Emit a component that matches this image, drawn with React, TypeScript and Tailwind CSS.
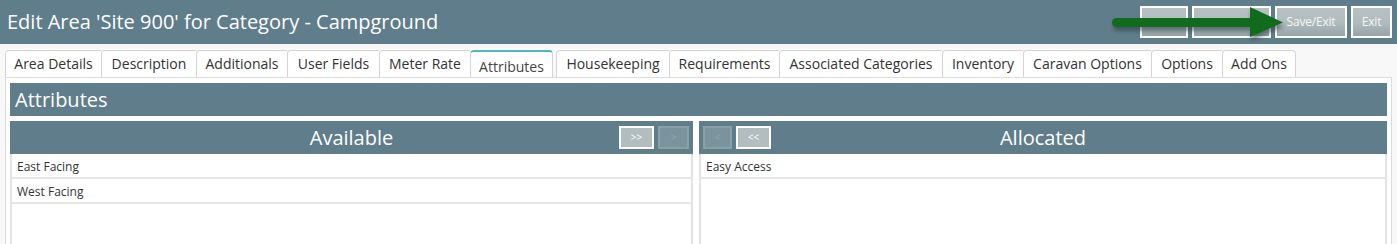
import React from 'react';

const tabs = [
  { label: 'Area Details', w: 96 },
  { label: 'Description', w: 95 },
  { label: 'Additionals', w: 91 },
  { label: 'User Fields', w: 92 },
  { label: 'Meter Rate', w: 91 },
  { label: 'Attributes', w: 83, active: true },
  { label: 'Housekeeping', w: 113 },
  { label: 'Requirements', w: 110 },
  { label: 'Associated Categories', w: 163 },
  { label: 'Inventory', w: 81 },
  { label: 'Caravan Options', w: 128 },
  { label: 'Options', w: 71 },
  { label: 'Add Ons', w: 74, last: true },
];

const font = { fontFamily: '"Open Sans", "Noto Sans", sans-serif' };

function HeadButton({ label, w }: { label?: string; w: string }) {
  return (
    <div
      className={`${w} h-[32px] border-2 border-white bg-gradient-to-b from-[#b6c1c3] via-[#b1bcbe] to-[#97a4a8] flex items-center justify-center text-[12px] tracking-[-0.2px] text-[#f4f6f6]`}
    >
      {label}
    </div>
  );
}

function MoveButton({ label, disabled, w }: { label: string; disabled?: boolean; w: string }) {
  return (
    <div
      className={
        disabled
          ? `${w} h-[23px] border-2 border-[#8aa0a9] bg-[#7a939d] flex items-center justify-center text-[10px] text-[#93a8b0]`
          : `${w} h-[23px] border-2 border-white bg-[#b2bdbf] flex items-center justify-center text-[10px] text-white`
      }
    >
      {label}
    </div>
  );
}

function Panel({
  title,
  items,
  left,
  right,
  w,
}: {
  title: string;
  items: string[];
  left?: React.ReactNode;
  right?: React.ReactNode;
  w: string;
}) {
  return (
    <div className={w}>
      <div className="h-[33px] bg-[#607d8b] grid grid-cols-[1fr_auto_1fr] items-center px-[4px]">
        <div className="flex gap-[4px]">{left}</div>
        <div className="text-[20px] text-white leading-none">{title}</div>
        <div className="flex gap-[4px] justify-end">{right}</div>
      </div>
      <div className="border-x-2 border-[#e3e3e3] h-[140px]">
        {items.map((it) => (
          <div
            key={it}
            className="h-[25px] border-b-2 border-[#e6e6e6] flex items-center pt-[3px] px-[5px] text-[12px] text-[#333]"
          >
            {it}
          </div>
        ))}
      </div>
    </div>
  );
}

export default function App() {
  return (
    <div className="w-[1397px] h-[244px] overflow-hidden bg-[#f8f8f8] relative" style={font}>
      {/* Header */}
      <div className="h-[44px] bg-[#607d8b] flex items-center justify-between pl-[7px] pr-[5px]">
        <h1 className="text-[20px] text-white">Edit Area 'Site 900' for Category - Campground</h1>
        <div className="flex items-center gap-[4px] -mt-[1px]">
          <HeadButton w="w-[48px]" />
          <HeadButton w="w-[79px]" />
          <HeadButton w="w-[72px]" label="Save/Exit" />
          <HeadButton w="w-[41px]" label="Exit" />
        </div>
      </div>

      {/* Green arrow */}
      <svg className="absolute left-[1105px] top-[2px]" width="190" height="42" viewBox="0 0 190 42">
        <defs>
          <filter id="sh" x="-10%" y="-30%" width="120%" height="160%">
            <feGaussianBlur stdDeviation="2" />
          </filter>
        </defs>
        <g fill="#2b3a40" opacity="0.55" filter="url(#sh)" transform="translate(1 4)">
          <rect x="7" y="16" width="140" height="9" rx="4.5" />
          <polygon points="145,5 178,20.5 145,35" />
        </g>
        <rect x="7" y="16" width="142" height="9" rx="4.5" fill="#116b1c" />
        <polygon points="145,5 178,20.5 145,35" fill="#116b1c" />
      </svg>

      {/* Tabs */}
      <div className="flex pl-[5px] mt-[6px] h-[27px]">
        {tabs.map((t) => (
          <div
            key={t.label}
            style={{ width: t.w }}
            className={
              t.active
                ? 'h-[27px] shrink-0 bg-white border border-b-0 border-[#d4d4d4] border-t-2 border-t-[#4bb8c2] rounded-t-[4px] flex items-center justify-center pt-[3px] mr-[3px] text-[14px] text-[#444]'
                : t.last
                ? 'h-[27px] shrink-0 bg-white border border-b-0 border-[#d4d4d4] rounded-t-[4px] flex items-center justify-center pb-[1px] text-[14px] text-[#333]'
                : 'h-[27px] shrink-0 bg-white border-l border-t border-[#d4d4d4] rounded-tl-[4px] flex items-center justify-center pb-[1px] text-[14px] text-[#333]'
            }
          >
            {t.label}
          </div>
        ))}
      </div>

      {/* Content */}
      <div className="mx-[5px] border border-[#dcdcdc] bg-white px-[4px] pt-[5px] h-[220px]">
        <div className="h-[33px] bg-[#607d8b] flex items-center px-[5px] text-[20px] text-white">
          Attributes
        </div>
        <div className="flex gap-[6px] mt-[5px]">
          <Panel
            w="w-[683px]"
            title="Available"
            items={['East Facing', 'West Facing']}
            right={
              <>
                <MoveButton w="w-[35px]" label=">>" />
                <MoveButton w="w-[31px]" label=">" disabled />
              </>
            }
          />
          <Panel
            w="flex-1"
            title="Allocated"
            items={['Easy Access']}
            left={
              <>
                <MoveButton w="w-[29px]" label="<" disabled />
                <MoveButton w="w-[35px]" label="<<" />
              </>
            }
          />
        </div>
      </div>
    </div>
  );
}
